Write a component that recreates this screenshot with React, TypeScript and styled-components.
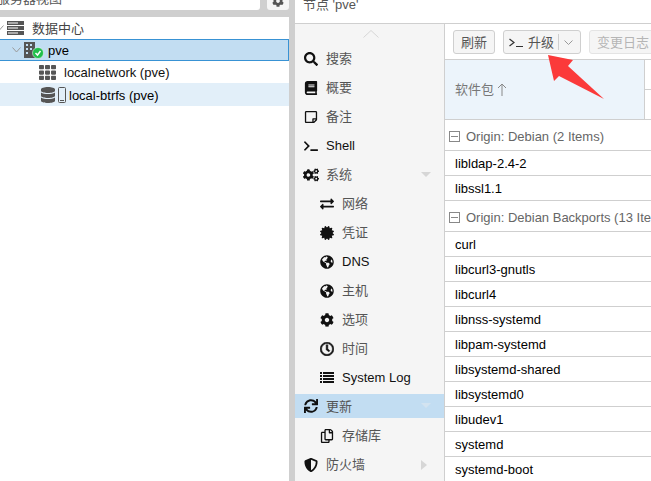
import React from "react";
import styled, { createGlobalStyle } from "styled-components";
import {
  FaSearch, FaBook, FaRegStickyNote, FaTerminal, FaCogs, FaExchangeAlt, FaCertificate,
  FaGlobeAmericas, FaCog, FaRegClock, FaSync, FaRegCopy, FaShieldAlt, FaTh, FaDatabase,
} from "react-icons/fa";

const Global = createGlobalStyle`
  html, body { margin: 0; padding: 0; background: #fff; overflow: hidden; }
  body { font-family: "Liberation Sans", "Noto Sans CJK SC", sans-serif; font-size: 13px; line-height: 15px; color: #000; }
`;

const Page = styled.div`
  position: relative;
  width: 651px;
  height: 481px;
  overflow: hidden;
  display: grid;
  grid-template-columns: 289px 6px 1fr;
`;
const LeftPanel = styled.div`
  display: flex;
  flex-direction: column;
  min-width: 0;
`;
const Splitter = styled.div`
  background: #cfcfcf;
  height: 100%;
`;
const TopBar = styled.div`
  height: 17px;
  background: #cfcfcf;
  display: flex;
  justify-content: space-between;
  align-items: flex-start;
`;
const ViewField = styled.div`
  width: 260px;
  height: 10px;
  background: #fff;
  border-bottom-right-radius: 3px;
  overflow: hidden;
  display: flex;
  align-items: flex-end;
  color: #555;
`;
const ViewText = styled.span`
  margin-left: -3px;
  margin-bottom: 4px;
  font-size: 13px;
  flex: none;
`;
const GearButton = styled.div`
  width: 22px;
  height: 10px;
  background: #f5f5f5;
  border-bottom-left-radius: 3px;
  border-bottom-right-radius: 3px;
  display: flex;
  align-items: flex-end;
  justify-content: center;
  overflow: hidden;
  color: #555;
  font-size: 12px;
  box-sizing: border-box;
  svg { margin-bottom: 3px; }
`;
const Tree = styled.div`
  flex: 1;
  background: #fff;
`;
const TreeRow = styled.div<{ $indent: number; $state?: "sel" | "hover"; $h?: number }>`
  box-sizing: border-box;
  height: ${(p) => p.$h ?? 22}px;
  display: flex;
  align-items: center;
  padding-left: ${(p) => p.$indent}px;
  padding-top: ${(p) => (p.$state === "hover" ? 1 : 0)}px;
  background: ${(p) => (p.$state === "sel" ? "#c2ddf2" : p.$state === "hover" ? "#e2eff9" : "#fff")};
  border: ${(p) => (p.$state === "sel" ? "1px solid #3892d4" : "none")};
  border-left: none;
  color: ${(p) => (p.$state ? "#000" : "#111")};
  gap: 5px;
`;
const Chevron = styled.svg`
  flex: none;
  width: 9px;
  height: 6px;
  fill: none;
  stroke: #999;
  stroke-width: 1;
`;
const TreeIcon = styled.span`
  display: inline-flex;
  color: #555;
  flex: none;
  position: relative;
`;
const TreeLabelMuted = styled.span`
  color: #444;
`;
const RightPanel = styled.div`
  display: flex;
  flex-direction: column;
  min-width: 0;
`;
const TitleBar = styled.div`
  height: 23px;
  border-bottom: 1px solid #cfcfcf;
  display: flex;
  align-items: flex-end;
  overflow: hidden;
  padding-left: 8px;
  color: #555;
  box-sizing: content-box;
`;
const TitleText = styled.span`
  margin-bottom: 11px;
  flex: none;
`;
const Body = styled.div`
  flex: 1;
  display: grid;
  grid-template-columns: 150px 1fr;
  min-height: 0;
`;
const Nav = styled.nav`
  background: #f5f5f5;
  border-right: 1px solid #cfcfcf;
  display: flex;
  flex-direction: column;
  align-items: stretch;
  min-width: 0;
`;
const NavUp = styled.div`
  height: 20px;
  display: flex;
  justify-content: center;
  align-items: flex-start;
  padding: 6px 0 0 2px;
  box-sizing: border-box;
  svg { width: 16px; height: 8px; fill: none; stroke: #d6d6d6; stroke-width: 1; }
`;
const NavItem = styled.div<{ $sub?: boolean; $active?: boolean; $dark?: boolean }>`
  box-sizing: border-box;
  flex: none;
  display: flex;
  align-items: center;
  position: relative;
  padding-left: ${(p) => (p.$sub ? 24 : 8)}px;
  color: ${(p) => (p.$dark ? "#111" : "#555")};
  background: ${(p) => (p.$active ? "#c2ddf2" : "transparent")};
  height: ${(p) => (p.$active ? 24 : 29)}px;
  margin: ${(p) => (p.$active ? "2px 0 3px" : "0")};
`;
const NavIcon = styled.span`
  width: 16px;
  flex: none;
  display: inline-flex;
  justify-content: center;
  color: #111;
  font-size: 14px;
  margin-right: 7px;
`;
const BoldClock = styled(FaRegClock)`
  stroke: #111;
  stroke-width: 24px;
`;
const ListGlyph = styled.svg`
  width: 14px;
  height: 12px;
  fill: #111;
`;
const NavCaret = styled.span<{ $dir: "down" | "right"; $onBlue?: boolean }>`
  position: absolute;
  width: 0;
  height: 0;
  ${(p) =>
    p.$dir === "down"
      ? `right: 13px; top: 50%; margin-top: -3px; border-left: 5px solid transparent; border-right: 5px solid transparent; border-top: 5px solid ${p.$onBlue ? "#d3e3f0" : "#d6d6d6"};`
      : "right: 17px; top: 50%; margin-top: -5px; border-top: 5px solid transparent; border-bottom: 5px solid transparent; border-left: 6px solid #d6d6d6;"}
`;
const Content = styled.div`
  display: flex;
  flex-direction: column;
  min-width: 0;
  overflow: hidden;
`;
const Toolbar = styled.div`
  height: 36px;
  flex: none;
  box-sizing: border-box;
  padding: 6px 0 0 8px;
  display: flex;
  gap: 8px;
  align-items: flex-start;
  border-bottom: 1px solid #cfcfcf;
  background: #fff;
`;
const Btn = styled.div<{ $disabled?: boolean }>`
  box-sizing: border-box;
  height: 24px;
  flex: none;
  background: #f5f5f5;
  border: 1px solid ${(p) => (p.$disabled ? "#e4e4e4" : "#cfcfcf")};
  border-radius: 3px;
  color: ${(p) => (p.$disabled ? "#b5b5b5" : "#555")};
  display: flex;
  align-items: center;
  padding: 0 7px;
  font-size: 13px;
`;
const SplitBtn = styled(Btn)`
  padding: 0 0 0 5px;
  width: 78px;
  gap: 5px;
`;
const BtnDivider = styled.span`
  width: 1px;
  height: 16px;
  background: #cfcfcf;
  margin-left: -1px;
`;
const BtnChevron = styled.svg`
  width: 9px;
  height: 5px;
  fill: none;
  stroke: #999;
`;
const PromptGlyph = styled.svg`
  width: 14px;
  height: 10px;
  fill: none;
  stroke: #333;
  stroke-width: 1.2;
  flex: none;
  margin-top: 2px;
`;
const HeaderRow = styled.div`
  height: 60px;
  flex: none;
  display: grid;
  grid-template-columns: 199px 1px 1fr;
  border-bottom: 1px solid #cfcfcf;
  box-sizing: border-box;
`;
const HeaderCell = styled.div`
  background: #ecf4fb;
  display: flex;
  align-items: center;
  padding-left: 10px;
  color: #777;
  gap: 3px;
  font-size: 13px;
`;
const SortArrow = styled.svg`
  width: 10px;
  height: 13px;
  fill: none;
  stroke: #888;
  stroke-width: 1;
`;
const HeaderSep = styled.div`
  background: #cfcfcf;
`;
const HeaderTail = styled.div`
  display: flex;
  flex-direction: column;
`;
const HeaderTailTop = styled.div`
  height: 29px;
  border-bottom: 1px solid #cfcfcf;
`;
const GroupRow = styled.div`
  box-sizing: border-box;
  height: 31px;
  flex: none;
  border-bottom: 1px solid #cfcfcf;
  display: flex;
  align-items: center;
  padding: 2px 0 0 4px;
  gap: 6px;
  color: #666;
  white-space: nowrap;
`;
const Collapse = styled.span`
  box-sizing: border-box;
  width: 11px;
  height: 11px;
  border: 1px solid #888;
  flex: none;
  position: relative;
  &::after {
    content: "";
    position: absolute;
    left: 1px;
    right: 1px;
    top: 4px;
    height: 1px;
    background: #888;
  }
`;
const DataRow = styled.div`
  box-sizing: border-box;
  height: 25px;
  flex: none;
  border-bottom: 1px solid #cfcfcf;
  display: flex;
  align-items: center;
  padding-left: 10px;
  color: #000;
`;
const Arrow = styled.svg`
  position: absolute;
  left: 545px;
  top: 52px;
  width: 62px;
  height: 50px;
  fill: #fb3a3a;
`;

const ListIcon = () => (
  <ListGlyph viewBox="0 0 14 12">
    <path d="M0 0h2v2H0zM3 0h11v2H3zM0 3h2v2H0zM3 3h11v2H3zM0 6h2v2H0zM3 6h11v2H3zM0 9h2v2H0zM3 9h11v2H3z" />
  </ListGlyph>
);

const nav: { label: string; icon: React.ReactNode; sub?: boolean; dark?: boolean; active?: boolean; caret?: "down" | "right" }[] = [
  { label: "搜索", icon: <FaSearch /> },
  { label: "概要", icon: <FaBook /> },
  { label: "备注", icon: <FaRegStickyNote /> },
  { label: "Shell", icon: <FaTerminal />, dark: true },
  { label: "系统", icon: <FaCogs size={16} />, caret: "down" },
  { label: "网络", icon: <FaExchangeAlt />, sub: true },
  { label: "凭证", icon: <FaCertificate />, sub: true },
  { label: "DNS", icon: <FaGlobeAmericas />, sub: true, dark: true },
  { label: "主机", icon: <FaGlobeAmericas />, sub: true },
  { label: "选项", icon: <FaCog />, sub: true },
  { label: "时间", icon: <BoldClock />, sub: true },
  { label: "System Log", icon: <ListIcon />, sub: true, dark: true },
  { label: "更新", icon: <FaSync />, active: true, caret: "down" },
  { label: "存储库", icon: <FaRegCopy />, sub: true },
  { label: "防火墙", icon: <FaShieldAlt />, caret: "right" },
];

const debian = ["libldap-2.4-2", "libssl1.1"];
const backports = ["curl", "libcurl3-gnutls", "libcurl4", "libnss-systemd", "libpam-systemd", "libsystemd-shared", "libsystemd0", "libudev1", "systemd", "systemd-boot"];

const DownChevron = () => (
  <Chevron viewBox="0 0 9 6"><path d="M0.5 0.5 L4.5 5 L8.5 0.5" /></Chevron>
);

export default function App() {
  return (
    <Page>
      <Global />
      <LeftPanel>
        <TopBar>
          <ViewField><ViewText>服务器视图</ViewText></ViewField>
          <GearButton><FaCog /></GearButton>
        </TopBar>
        <Tree>
          <TreeRow $indent={0} $h={22}>
            <Chevron viewBox="0 0 9 6" style={{ marginLeft: -5, marginRight: -2 }}><path d="M0.5 0.5 L4.5 5 L8.5 0.5" /></Chevron>
            <TreeIcon>
              <svg width="17" height="14" viewBox="0 0 17 14">
                <path fill="#555" d="M0 0h17v4H0zM0 5h17v4H0zM0 10h17v4H0z" />
                <path fill="#fff" d="M1 1.5h10v1H1zM1 6.5h10v1H1zM1 11.5h10v1H1z" />
              </svg>
            </TreeIcon>
            <TreeLabelMuted style={{ marginLeft: 3 }}>数据中心</TreeLabelMuted>
          </TreeRow>
          <TreeRow $indent={12} $state="sel" $h={22}>
            <DownChevron />
            <TreeIcon>
              <svg width="21" height="17" viewBox="0 0 21 17" style={{ marginLeft: -3 }}>
                <path fill="#555" d="M1 0h11v16H1z" />
                <path fill="#c2ddf2" d="M3 2h2v2H3zM7 2h2v2H7zM3 6h2v2H3zM7 6h2v2H7zM3 10h2v2H3z" />
                <circle cx="15" cy="11" r="5.5" fill="#21bf4b" stroke="#fff" strokeWidth="0.5" />
                <path d="M12.5 11 L14.5 13 L17.5 9" stroke="#fff" strokeWidth="1.5" fill="none" />
              </svg>
            </TreeIcon>
            <span style={{ marginLeft: -1 }}>pve</span>
          </TreeRow>
          <TreeRow $indent={39}>
            <TreeIcon><FaTh size={17} /></TreeIcon>
            <span style={{ marginLeft: 3 }}>localnetwork (pve)</span>
          </TreeRow>
          <TreeRow $indent={40} $state="hover" $h={23}>
            <TreeIcon><FaDatabase size={16} /></TreeIcon>
            <svg width="8" height="17" viewBox="0 0 8 17" style={{ marginLeft: -3 }}>
              <rect x="0.5" y="0.5" width="7" height="15" rx="1" fill="none" stroke="#555" />
              <path d="M2 13.5h4" stroke="#555" />
            </svg>
            <span style={{ marginLeft: -2 }}>local-btrfs (pve)</span>
          </TreeRow>
        </Tree>
      </LeftPanel>
      <Splitter />
      <RightPanel>
        <TitleBar><TitleText>节点 'pve'</TitleText></TitleBar>
        <Body>
          <Nav>
            <NavUp><svg viewBox="0 0 16 8"><path d="M0.5 7.5 L8 0.5 L15.5 7.5" /></svg></NavUp>
            {nav.map((n) => (
              <NavItem key={n.label} $sub={n.sub} $dark={n.dark} $active={n.active}>
                <NavIcon>{n.icon}</NavIcon>
                {n.label}
                {n.caret && <NavCaret $dir={n.caret} $onBlue={n.active} />}
              </NavItem>
            ))}
          </Nav>
          <Content>
            <Toolbar>
              <Btn>刷新</Btn>
              <SplitBtn>
                <PromptGlyph viewBox="0 0 14 10"><path d="M0.5 1 L5 4.5 L0.5 8 M7 8.5h7" /></PromptGlyph>
                升级
                <BtnDivider />
                <BtnChevron viewBox="0 0 9 5"><path d="M0.5 0.5 L4.5 4.5 L8.5 0.5" /></BtnChevron>
              </SplitBtn>
              <Btn $disabled>变更日志</Btn>
            </Toolbar>
            <HeaderRow>
              <HeaderCell>
                软件包
                <SortArrow viewBox="0 0 10 13"><path d="M5 13V1M1 5l4-4 4 4" /></SortArrow>
              </HeaderCell>
              <HeaderSep />
              <HeaderTail><HeaderTailTop /></HeaderTail>
            </HeaderRow>
            <GroupRow><Collapse />Origin: Debian (2 Items)</GroupRow>
            {debian.map((r) => <DataRow key={r}>{r}</DataRow>)}
            <GroupRow><Collapse />Origin: Debian Backports (13 Items)</GroupRow>
            {backports.map((r) => <DataRow key={r}>{r}</DataRow>)}
          </Content>
        </Body>
      </RightPanel>
      <Arrow viewBox="0 0 62 50"><path d="M3 3 L28 8 L23 14 L59 47 L14 24 L9 29 Z" /></Arrow>
    </Page>
  );
}
